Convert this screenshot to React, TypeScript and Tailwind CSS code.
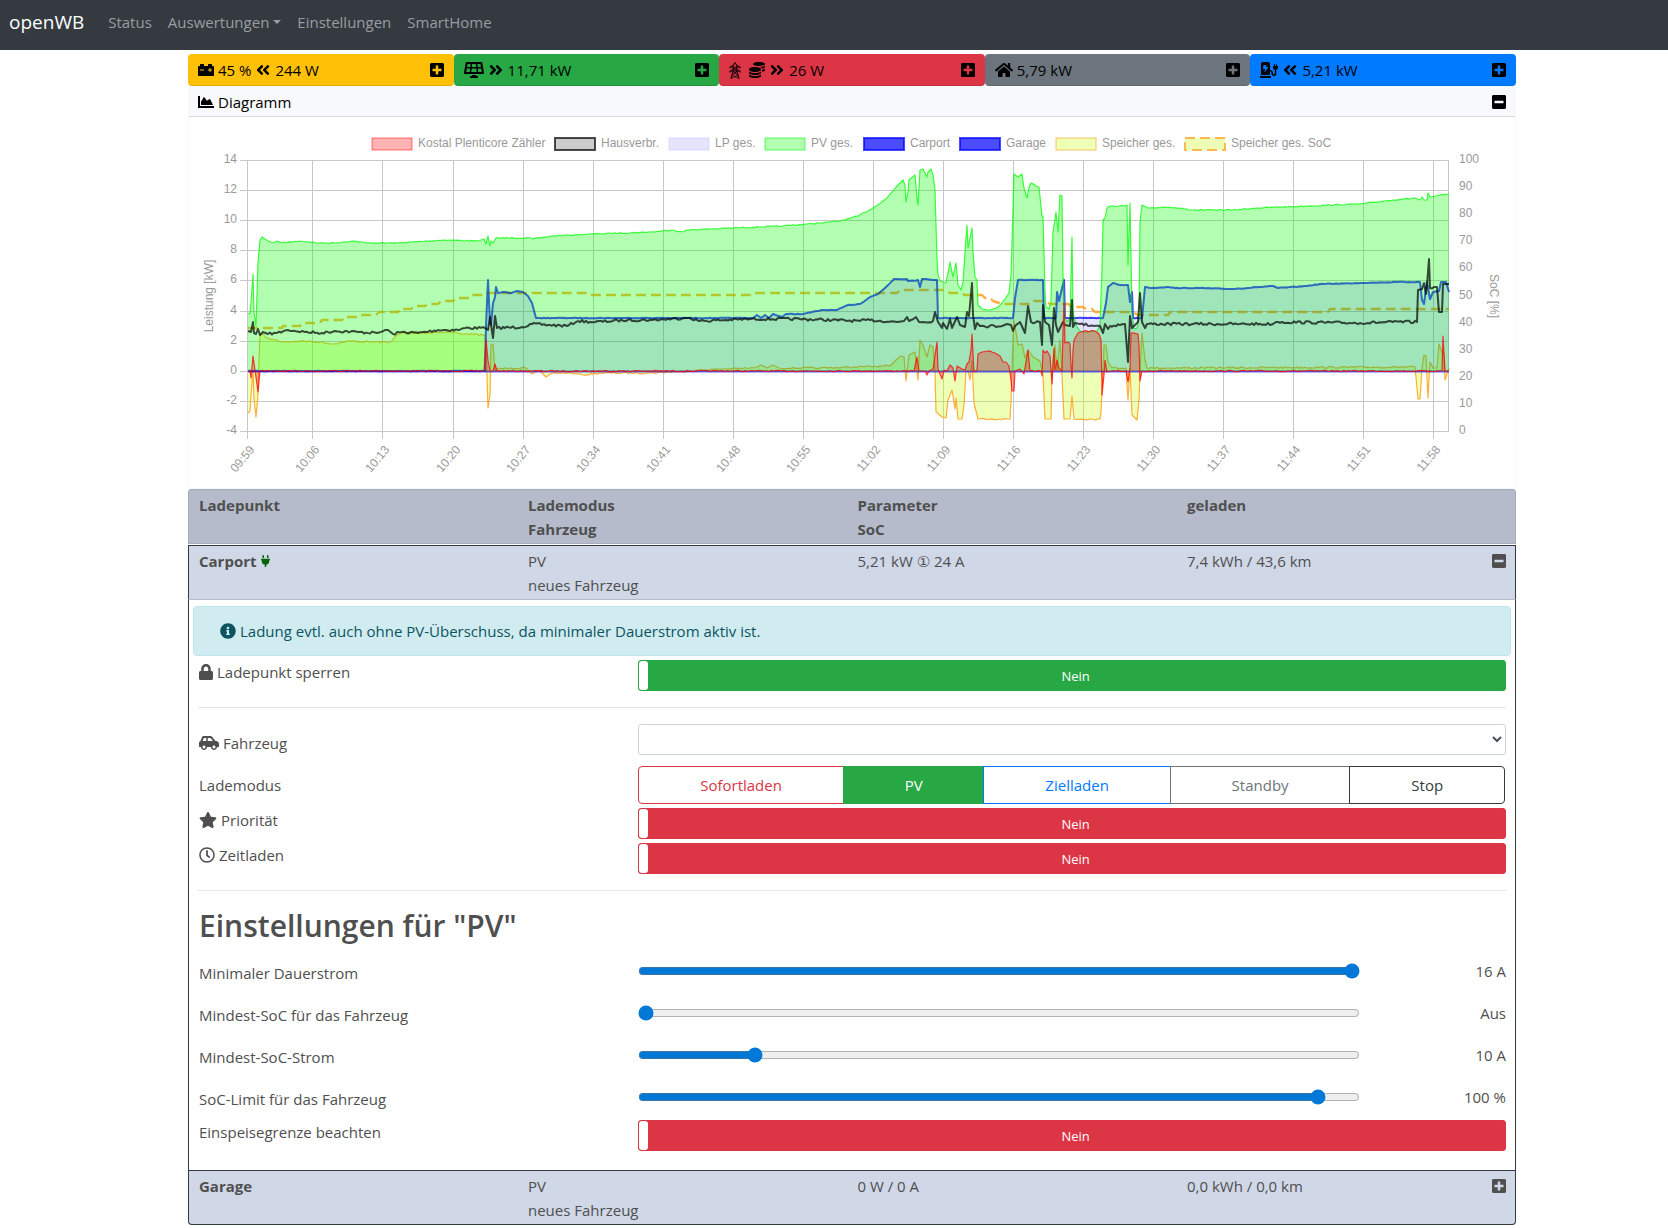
import { useState } from "react";
import type { ReactNode } from "react";
import {
  FaAngleDoubleLeft,
  FaAngleDoubleRight,
  FaCarBattery,
  FaCarSide,
  FaChargingStation,
  FaChartArea,
  FaCoins,
  FaHome,
  FaInfoCircle,
  FaLock,
  FaMinusSquare,
  FaPlug,
  FaPlusSquare,
  FaRegClock,
  FaSolarPanel,
  FaStar,
} from "react-icons/fa";

/* ---------- chart data (chart coordinates, zero line at y = 371) ---------- */

const ZERO = 371;

const pvPoints =
  "248,314 250,313 251,302 253,274 254,312 256,326 258,262 260,240 262,237 268,241 273,243 277,241 282,243 300,241 318,243 335,243 352,241 367,243 398,243 445,240 478,241 484,239 486,244 488,236 490,246 491,241 493,243 496,238 531,238 533,239 552,236 592,234 652,232 672,230 682,232 687,230 733,228 783,226 820,223 840,221 858,216 873,208 887,198 897,186 903,180 905,185 906,202 908,192 909,180 915,175 917,198 918,205 920,170 923,169 925,173 927,177 928,172 931,169 933,175 935,190 936,225 937,258 938,275 940,281 943,282 946,283 950,262 953,277 956,263 958,285 961,290 963,282 965,252 967,225 968,248 972,228 973,252 975,277 977,280 978,305 982,309 990,310 998,307 1005,299 1009,293 1011,275 1013,208 1014,174 1018,177 1022,174 1024,188 1027,198 1029,187 1031,183 1039,187 1042,216 1043,216 1045,292 1046,307 1049,309 1051,302 1053,232 1056,212 1058,232 1060,195 1062,196 1063,275 1065,318 1067,322 1070,318 1072,237 1073,312 1076,325 1080,331 1085,332 1097,331 1100,325 1102,268 1103,220 1105,218 1107,208 1110,206 1125,206 1127,205 1128,265 1130,203 1132,312 1134,329 1137,328 1139,318 1140,222 1142,205 1148,208 1168,207 1193,210 1233,210 1257,208 1307,206 1360,204 1393,200 1415,198 1420,200 1422,197 1424,200 1427,200 1428,193 1430,197 1449,194";

const housePoints =
  "248,331 251,332 253,322 254,333 256,334 258,329 260,335 263,332 268,334 277,333 288,330 305,332 322,333 335,331 358,332 377,333 388,330 393,334 402,332 418,333 438,330 458,330 465,328 485,328 488,330 490,317 493,338 495,316 497,328 522,327 532,324 548,325 567,326 578,321 595,322 628,320 652,320 685,318 690,318 700,321 750,319 800,319 860,321 870,320 897,322 904,321 907,317 909,321 916,317 919,322 933,321 935,312 938,322 942,328 943,323 947,329 950,319 952,328 957,317 960,325 965,327 967,312 969,316 972,283 973,315 975,329 977,323 980,326 1002,326 1007,324 1011,325 1013,331 1015,326 1020,322 1025,333 1028,306 1031,322 1040,322 1042,345 1043,305 1045,322 1049,325 1052,345 1054,308 1056,325 1058,332 1063,322 1065,325 1070,326 1072,300 1073,327 1075,323 1080,324 1100,326 1103,333 1105,324 1108,329 1110,326 1125,324 1128,362 1130,316 1132,328 1138,322 1140,293 1142,322 1145,328 1147,324 1193,324 1240,324 1273,324 1276,322 1360,323 1393,322 1417,322 1418,290 1422,289 1424,283 1426,294 1427,285 1429,259 1430,288 1437,287 1439,312 1442,312 1443,284 1449,284";

const carportPoints =
  "248,371 485,371 486,325 488,280 490,322 491,325 493,303 495,297 496,287 498,293 505,292 510,293 517,291 523,292 528,296 532,303 536,318 540,318 753,318 757,315 761,318 765,315 769,318 773,314 782,317 786,314 803,314 822,310 837,310 848,305 860,304 870,297 878,294 885,288 894,279 907,279 908,281 918,280 920,287 922,279 937,280 938,318 1013,318 1015,298 1018,280 1029,280 1043,280 1044,318 1056,318 1057,292 1059,301 1064,280 1065,318 1103,318 1106,303 1108,287 1113,283 1120,285 1128,285 1130,302 1132,292 1133,318 1142,318 1145,287 1152,288 1167,287 1175,288 1200,288 1233,289 1273,286 1278,288 1307,286 1320,284 1360,283 1397,282 1420,282 1422,300 1424,304 1426,288 1427,282 1430,299 1433,292 1439,291 1441,282 1446,282 1449,292";

const gridPoints =
  "248,371 250,371 251,378 253,356 255,370 258,392 260,371 484,371 486,340 488,360 490,371 493,371 495,364 497,371 905,371 914,371 917,357 919,371 925,371 927,375 929,371 933,369 937,342 938,369 942,379 944,370 947,371 950,365 953,368 955,381 957,366 962,369 965,370 967,364 969,362 971,350 972,334 974,372 977,370 978,354 982,352 988,351 995,353 1000,356 1003,362 1006,362 1009,366 1011,380 1012,391 1014,391 1015,371 1020,369 1024,374 1028,350 1030,371 1041,371 1042,376 1043,350 1045,353 1047,351 1050,356 1052,384 1054,348 1055,370 1057,360 1059,368 1062,371 1063,330 1064,303 1065,343 1068,342 1070,344 1071,365 1072,378 1073,350 1074,340 1078,333 1084,331 1095,331 1099,334 1101,340 1102,385 1102,395 1104,375 1105,360 1107,372 1112,371 1126,371 1128,382 1130,368 1131,333 1138,334 1139,345 1140,381 1142,371 1440,371 1442,370 1443,336 1445,371 1449,371";

const batteryPoints =
  "248,413 250,411 251,395 253,370 254,400 256,417 258,395 259,360 260,335 263,334 266,338 275,340 282,342 300,341 320,342 332,344 350,341 370,342 390,342 397,335 402,333 415,333 450,332 465,334 485,335 486,345 488,408 490,395 491,345 493,344 495,371 497,369 510,368 526,368 532,374 540,371 546,377 552,373 570,373 583,375 600,373 650,373 690,371 720,369 755,368 761,365 767,368 773,365 779,368 820,368 890,366 896,360 901,356 904,357 906,381 909,355 915,352 918,380 920,340 923,345 927,357 930,345 933,347 935,371 936,412 942,417 946,418 948,400 952,390 955,409 956,398 958,419 962,419 964,405 966,371 968,371 970,380 972,360 974,403 978,419 1010,419 1011,400 1013,340 1014,320 1018,345 1022,344 1025,358 1028,350 1033,357 1040,361 1043,375 1045,419 1051,419 1052,371 1055,345 1057,371 1060,340 1062,375 1064,419 1070,419 1072,396 1074,419 1100,419 1101,412 1103,371 1104,345 1106,345 1108,362 1112,368 1126,368 1128,400 1130,368 1132,415 1137,420 1139,400 1140,371 1142,333 1145,360 1147,368 1415,367 1418,399 1420,399 1422,368 1424,355 1426,356 1428,398 1430,362 1433,368 1437,368 1439,344 1442,353 1444,353 1445,380 1447,374 1449,368";

const socPoints =
  "248,328 282,328 283,326 300,326 302,323 320,323 322,320 342,320 344,317 358,317 360,315 376,315 379,312 398,312 400,309 411,309 414,306 425,306 428,304 438,304 441,301 453,301 456,298 470,298 472,295 484,295 487,293 590,293 592,295 750,295 752,293 897,293 900,290 945,290 950,293 960,293 965,295 982,295 985,298 990,298 993,301 1002,304 1030,304 1033,301 1045,301 1050,304 1068,304 1072,307 1083,307 1086,309 1092,309 1095,312 1133,312 1138,315 1168,315 1170,312 1328,312 1330,309 1449,309";

// adds the measuring ripple between the recorded points
const ripple = (points: string, amount: number) => {
  const list = points.split(" ").map((p) => p.split(",").map(Number));
  const out: string[] = [];
  let seed = 7;
  list.forEach(([x, y], i) => {
    out.push(`${x},${y}`);
    const next = list[i + 1];
    if (!next || next[0] - x < 7 || amount === 0) return;
    for (let step = x + 2; step < next[0] - 1; step += 2) {
      seed = (seed * 16807) % 2147483647;
      const noise = (seed / 2147483647 - 0.5) * 2 * amount;
      const base = y + ((next[1] - y) * (step - x)) / (next[0] - x);
      out.push(`${step},${(base + noise).toFixed(1)}`);
    }
  });
  return out.join(" ");
};

const pv = ripple(pvPoints, 0.5);
const house = ripple(housePoints, 1.3);
const carport = ripple(carportPoints, 0.3);
const grid = ripple(gridPoints, 0.7);
const battery = ripple(batteryPoints, 0.8);

const area = (points: string) => `248,${ZERO} ${points} 1449,${ZERO}`;

const legend = [
  { x: 371, label: "Kostal Plenticore Zähler", fill: "rgba(255,0,0,0.3)", stroke: "rgba(255,0,0,0.5)" },
  { x: 554, label: "Hausverbr.", fill: "rgba(0,0,0,0.2)", stroke: "rgba(0,0,0,0.7)", width: 2 },
  { x: 668, label: "LP ges.", fill: "rgba(0,0,255,0.1)", stroke: "rgba(0,0,255,0.05)", width: 2 },
  { x: 764, label: "PV ges.", fill: "rgba(0,255,0,0.3)", stroke: "rgba(0,255,0,0.6)" },
  { x: 863, label: "Carport", fill: "rgba(0,0,255,0.7)", stroke: "rgba(0,0,255,0.7)", width: 2 },
  { x: 959, label: "Garage", fill: "rgba(0,0,255,0.7)", stroke: "rgba(0,0,255,0.7)", width: 2 },
  { x: 1055, label: "Speicher ges.", fill: "rgba(200,255,13,0.3)", stroke: "rgba(255,155,13,0.6)" },
  { x: 1184, label: "Speicher ges. SoC", fill: "rgba(200,255,13,0.3)", stroke: "rgba(255,155,13,0.7)", width: 2, dash: "10 5" },
];

const powerTicks = [14, 12, 10, 8, 6, 4, 2, 0, -2, -4];
const socTicks = [100, 90, 80, 70, 60, 50, 40, 30, 20, 10, 0];
const timeTicks = [
  { x: 247, label: "09:59" },
  { x: 312, label: "10:06" },
  { x: 382, label: "10:13" },
  { x: 453, label: "10:20" },
  { x: 523, label: "10:27" },
  { x: 593, label: "10:34" },
  { x: 663, label: "10:41" },
  { x: 733, label: "10:48" },
  { x: 803, label: "10:55" },
  { x: 873, label: "11:02" },
  { x: 943, label: "11:09" },
  { x: 1013, label: "11:16" },
  { x: 1083, label: "11:23" },
  { x: 1153, label: "11:30" },
  { x: 1223, label: "11:37" },
  { x: 1293, label: "11:44" },
  { x: 1363, label: "11:51" },
  { x: 1433, label: "11:58" },
];

const PowerChart = () => (
  <svg
    viewBox="189 117 1326 371"
    className="block w-full font-['Liberation_Sans',sans-serif] text-[12px]"
    role="img"
    aria-label="Diagramm"
  >
    {legend.map((item) => (
      <g key={item.label}>
        <rect
          x={item.x + 1}
          y="138"
          width="40"
          height="12"
          fill={item.fill}
          stroke={item.stroke}
          strokeWidth={item.width ?? 1}
          strokeDasharray={item.dash}
        />
        <text x={item.x + 47} y="147" fill="#999">
          {item.label}
        </text>
      </g>
    ))}

    {/* grid */}
    {powerTicks.map((value) => {
      const y = Math.round(ZERO - value * 15.09) + 0.5;
      return (
        <g key={value}>
          <line x1="240" x2="1449" y1={y} y2={y} stroke="#c8c8c8" />
          <text x="237" y={y + 2.5} textAnchor="end" fill="#999">
            {value}
          </text>
        </g>
      );
    })}
    {timeTicks.map((tick) => (
      <g key={tick.label}>
        <line x1={tick.x + 0.5} x2={tick.x + 0.5} y1="160" y2="439" stroke="#c8c8c8" />
        <text
          transform={`translate(${tick.x + 8} 450) rotate(-50)`}
          textAnchor="end"
          fill="#999"
        >
          {tick.label}
        </text>
      </g>
    ))}
    <line x1="1448.5" x2="1448.5" y1="160" y2="431" stroke="#c8c8c8" />
    {socTicks.map((value) => (
      <text key={value} x="1459" y={434 - value * 2.71} fill="#999">
        {value}
      </text>
    ))}
    <text transform="translate(213 296) rotate(-90)" textAnchor="middle" fill="#999">
      Leistung [kW]
    </text>
    <text transform="translate(1490 296) rotate(90)" textAnchor="middle" fill="#999">
      SoC [%]
    </text>

    {/* series, back to front */}
    <g fill="none" strokeLinejoin="round">
      <polyline points={socPoints} stroke="rgba(255,155,13,0.8)" strokeWidth="2.4" strokeDasharray="10 5" />
      <polygon points={area(battery)} fill="rgba(200,255,13,0.3)" />
      <polyline points={battery} stroke="rgba(255,155,13,0.8)" strokeWidth="1.2" />
      <line x1="248" x2="1449" y1="371.5" y2="371.5" stroke="rgba(0,0,255,0.6)" strokeWidth="2" />
      <polyline points={carport} stroke="rgba(0,0,255,0.7)" strokeWidth="2" />
      <polygon points={area(pv)} fill="rgba(0,255,0,0.3)" />
      <polyline points={pv} stroke="rgba(0,255,0,0.75)" strokeWidth="1.2" />
      <polygon points={area(carport)} fill="rgba(0,0,255,0.1)" />
      <polyline points={carport} stroke="rgba(0,0,255,0.1)" strokeWidth="2" />
      <polyline points={house} stroke="rgba(0,0,0,0.7)" strokeWidth="2" />
      <polygon points={area(grid)} fill="rgba(255,0,0,0.3)" />
      <polyline points={grid} stroke="rgba(255,0,0,0.75)" strokeWidth="1.2" />
    </g>
  </svg>
);

/* ---------- small parts ---------- */

const TowerIcon = () => (
  <svg viewBox="0 0 12 17" className="mr-1 h-[17px] w-3" fill="none" stroke="currentColor">
    <path d="M6 0.5 L4.2 3.5 L4.2 9 L1.8 16.5 M6 0.5 L7.8 3.5 L7.8 9 L10.2 16.5" />
    <path
      strokeWidth="0.8"
      d="M4.2 3 L0.8 5.2 H11.2 L7.8 3 M4.2 7 L0.8 9.2 H11.2 L7.8 7 M0.8 5.2 V6.4 M11.2 5.2 V6.4 M0.8 9.2 V10.6 M11.2 9.2 V10.6 M4.2 5.2 L7.8 9.2 M7.8 5.2 L4.2 9.2 M3.8 9.4 L9 13.2 M8.2 9.4 L3 13.2 M3 13.2 L10 16.4 M9 13.2 L2 16.4"
    />
  </svg>
);

const StatusCard = ({ className, name, children }: { className: string; name: string; children: ReactNode }) => (
  <div
    className={`flex h-8 flex-1 items-center justify-between rounded border border-transparent border-b-black/10 pr-2 pl-[9px] ${className}`}
  >
    <div className="flex items-center gap-1 whitespace-nowrap">{children}</div>
    <button type="button" aria-label={`${name} anzeigen`}>
      <FaPlusSquare className="size-4" />
    </button>
  </div>
);

const Row = ({ children }: { children: ReactNode }) => (
  <div className="grid grid-cols-3">{children}</div>
);

const RowLabel = ({ id, className, children }: { id: string; className?: string; children: ReactNode }) => (
  <label htmlFor={id} className={`flex h-6 items-center gap-1 pr-[5px] pl-1.5 ${className ?? ""}`}>
    {children}
  </label>
);

const Toggle = ({ id, green }: { id: string; green?: boolean }) => {
  const [checked, setChecked] = useState(false);

  return (
    <div className="col-span-2 pr-[5px] pl-1.5">
      <label
        className={`relative flex h-[31px] items-stretch rounded-[3px] border text-[13px] text-white ${
          green ? "border-[#28a745] bg-[#28a745]" : "border-[#dc3545] bg-[#dc3545]"
        }`}
      >
        <input
          id={id}
          type="checkbox"
          className="sr-only"
          checked={checked}
          onChange={(e) => setChecked(e.target.checked)}
        />
        <span className="w-[9px] rounded-[3px] bg-white" />
        <span className="flex flex-1 items-center justify-center pr-0.5">{checked ? "Ja" : "Nein"}</span>
      </label>
    </div>
  );
};

const Slider = ({ id, label, min, max, start, text }: any) => {
  const [value, setValue] = useState(start);

  return (
    <Row>
      <RowLabel id={id} className="mt-[7px]">
        {label}
      </RowLabel>
      <div className="col-span-2 grid h-[42px] grid-cols-6 pt-[5px]">
        <div className="col-span-5 flex h-6 items-center pr-[5px] pl-1.5">
          <input
            id={id}
            type="range"
            min={min}
            max={max}
            value={value}
            onChange={(e) => setValue(Number(e.target.value))}
            className="h-4 w-full accent-[#0078d7]"
          />
        </div>
        <div className="px-[5px] text-right">{text}</div>
      </div>
    </Row>
  );
};

const modes = [
  { name: "Sofortladen", style: "rounded-l border-[#dc3545] text-[#dc3545]" },
  { name: "PV", style: "border-[#28a745] bg-[#28a745] text-white" },
  { name: "Zielladen", style: "border-[#007bff] text-[#007bff]" },
  { name: "Standby", style: "border-[#6c757d] text-[#6c757d]" },
  { name: "Stop", style: "rounded-r border-[#343a40] text-[#343a40]" },
];

const sliders = [
  { id: "minCurrent", label: "Minimaler Dauerstrom", min: 6, max: 16, start: 16, text: "16 A" },
  { id: "minSoc", label: "Mindest-SoC für das Fahrzeug", min: 0, max: 19, start: 0, text: "Aus" },
  { id: "minSocCurrent", label: "Mindest-SoC-Strom", min: 6, max: 32, start: 10, text: "10 A" },
  { id: "maxSoc", label: "SoC-Limit für das Fahrzeug", min: 0, max: 21, start: 20, text: "100 %" },
];

/* ---------- charge point ---------- */

const ChargePointDetails = () => (
  <div className="px-1 pt-1.5 pb-[19px]">
    <div className="flex h-[50px] items-center gap-1 rounded border border-[#bee5eb] bg-[#d1ecf1] px-[26px] text-[#0c5460]">
      <FaInfoCircle className="size-4" />
      Ladung evtl. auch ohne PV-Überschuss, da minimaler Dauerstrom aktiv ist.
    </div>

    <div className="pt-1">
      <Row>
        <RowLabel id="lock">
          <FaLock className="h-4 w-[14px]" />
          Ladepunkt sperren
        </RowLabel>
        <Toggle id="lock" green />
      </Row>
    </div>

    <hr className="mx-[5px] my-4 border-black/10" />

    <Row>
      <RowLabel id="vehicle" className="mt-[7px]">
        <FaCarSide className="h-4 w-5" />
        Fahrzeug
      </RowLabel>
      <div className="col-span-2 pr-[5px] pl-1.5">
        <select
          id="vehicle"
          className="h-[31px] w-full rounded-[3px] border border-[#ced4da] bg-white px-1 text-[13px] text-[#495057]"
        >
          <option></option>
        </select>
      </div>
    </Row>

    <div className="grid grid-cols-3 pt-[11px] pb-1">
      <div className="flex items-center px-1.5">Lademodus</div>
      <div className="col-span-2 flex pr-[5px] pl-1.5" role="group" aria-label="Lademodus">
        {modes.map((mode) => (
          <button
            key={mode.name}
            type="button"
            className={`-mr-px h-[38px] flex-auto border px-3 last:mr-px ${mode.style}`}
          >
            {mode.name}
          </button>
        ))}
      </div>
    </div>

    <div className="space-y-1">
      <Row>
        <RowLabel id="priority">
          <FaStar className="h-4 w-[18px]" />
          Priorität
        </RowLabel>
        <Toggle id="priority" />
      </Row>
      <Row>
        <RowLabel id="timed">
          <FaRegClock className="size-4" />
          Zeitladen
        </RowLabel>
        <Toggle id="timed" />
      </Row>
    </div>

    <hr className="mx-[5px] my-4 border-black/10" />

    <h2 className="mb-2 px-1.5 text-[30px] leading-[38px] font-semibold">Einstellungen für "PV"</h2>

    <div className="-mb-0.5 pt-px">
      {sliders.map((slider) => (
        <Slider key={slider.id} {...slider} />
      ))}
    </div>
    <Row>
      <RowLabel id="feedIn">Einspeisegrenze beachten</RowLabel>
      <Toggle id="feedIn" />
    </Row>
  </div>
);

const ChargePoints = () => (
  <table className="w-full table-fixed border-separate border-spacing-0 text-left leading-6 text-[#4f4f4f]">
    <colgroup>
      <col className="w-[335px]" />
      <col />
      <col />
      <col className="w-[334px]" />
    </colgroup>
    <thead className="bg-[#b5bbca] align-top">
      <tr>
        <th className="h-[55px] rounded-tl border-y border-l border-[#a8adbb] pt-[3px] pl-[10px] font-bold">Ladepunkt</th>
        <th className="border-y border-[#a8adbb] pt-[3px] pl-[5px] font-bold">
          Lademodus
          <br />
          Fahrzeug
        </th>
        <th className="border-y border-[#a8adbb] pt-[3px] pl-[5px] font-bold">
          Parameter
          <br />
          SoC
        </th>
        <th className="rounded-tr border-y border-r border-[#a8adbb] pt-[3px] pl-[5px] font-bold">geladen</th>
      </tr>
      <tr aria-hidden="true">
        <td colSpan={4} className="h-px bg-white"></td>
      </tr>
    </thead>
    <tbody className="align-top">
      <tr className="bg-[#d0d7e7]">
        <th className="h-[55px] border-t border-b border-l border-[#343a40] border-b-[#b5bbca] pt-[3px] pl-[10px] font-bold">
          <span className="flex items-center gap-1">
            Carport <FaPlug className="h-3 w-[9px] text-[#006400]" />
          </span>
        </th>
        <td className="border-t border-b border-t-[#343a40] border-b-[#b5bbca] pt-[3px] pl-[5px]">
          PV
          <br />
          neues Fahrzeug
        </td>
        <td className="border-t border-b border-t-[#343a40] border-b-[#b5bbca] pt-[3px] pl-[5px]">5,21 kW ① 24 A</td>
        <td className="border-t border-r border-b border-[#343a40] border-b-[#b5bbca] pt-[3px] pr-2 pl-[5px]">
          <div className="flex items-center justify-between">
            7,4 kWh / 43,6 km
            <button type="button" aria-label="Carport einklappen">
              <FaMinusSquare className="size-4" />
            </button>
          </div>
        </td>
      </tr>
      <tr>
        <td colSpan={4} className="border-x border-[#343a40]">
          <ChargePointDetails />
        </td>
      </tr>
      <tr className="bg-[#d0d7e7]">
        <th className="h-[55px] rounded-bl border-y border-l border-[#343a40] pt-[3px] pl-[10px] font-bold">Garage</th>
        <td className="border-y border-[#343a40] pt-[3px] pl-[5px]">
          PV
          <br />
          neues Fahrzeug
        </td>
        <td className="border-y border-[#343a40] pt-[3px] pl-[5px]">0 W / 0 A</td>
        <td className="rounded-br border-y border-r border-[#343a40] pt-[3px] pr-2 pl-[5px]">
          <div className="flex items-center justify-between">
            0,0 kWh / 0,0 km
            <button type="button" aria-label="Garage ausklappen">
              <FaPlusSquare className="size-4" />
            </button>
          </div>
        </td>
      </tr>
    </tbody>
  </table>
);

const App = () => {
  return (
    <div className="min-h-screen bg-white font-['Open_Sans','DejaVu_Sans',sans-serif] text-[15px] leading-6 text-black">
      <nav className="flex h-[50px] items-center bg-[#343a40] px-[9px] pb-1.5 text-[#9a9da0]">
        <a href="#" className="mr-6 text-[19px] text-white">
          openWB
        </a>
        <div className="flex items-center gap-4">
          <a href="#status">Status</a>
          <a href="#auswertungen" className="flex items-center gap-1">
            Auswertungen
            <span className="border-x-4 border-t-4 border-x-transparent border-t-current" />
          </a>
          <a href="#einstellungen">Einstellungen</a>
          <a href="#smarthome">SmartHome</a>
        </div>
      </nav>

      <div className="pl-9">
        <main className="mx-auto max-w-[1328px] pt-1">
          <div className="flex">
            <StatusCard className="bg-[#ffc107]" name="Speicher">
              <FaCarBattery className="size-4" />
              45 % <FaAngleDoubleLeft className="size-4" /> 244 W
            </StatusCard>
            <StatusCard className="bg-[#28a745]" name="PV">
              <FaSolarPanel className="h-4 w-5" />
              <FaAngleDoubleRight className="size-4" /> 11,71 kW
            </StatusCard>
            <StatusCard className="bg-[#dc3545]" name="Netz">
              <TowerIcon />
              <FaCoins className="size-4" />
              <FaAngleDoubleRight className="size-4" /> 26 W
            </StatusCard>
            <StatusCard className="bg-[#6c757d]" name="Hausverbrauch">
              <FaHome className="h-4 w-[18px]" />
              5,79 kW
            </StatusCard>
            <StatusCard className="bg-[#007bff]" name="Ladeleistung">
              <FaChargingStation className="h-4 w-[18px]" />
              <FaAngleDoubleLeft className="size-4" /> 5,21 kW
            </StatusCard>
          </div>

          <section className="border border-t-0 border-[#f8f9fc]">
            <div className="flex h-[31px] items-center justify-between border-b border-[#d9dbde] bg-[#f8f9fc] pt-0.5 pr-2 pl-[9px]">
              <h1 className="flex items-center gap-1">
                <FaChartArea className="size-4" />
                Diagramm
              </h1>
              <button type="button" aria-label="Diagramm einklappen">
                <FaMinusSquare className="size-4" />
              </button>
            </div>
            <PowerChart />
          </section>

          <ChargePoints />
        </main>
      </div>
    </div>
  );
};

export default App;
